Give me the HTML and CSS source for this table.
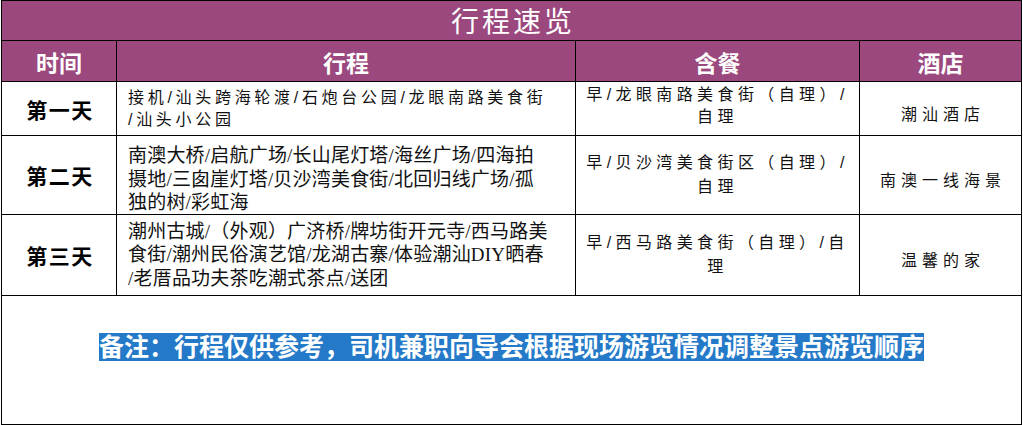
FILE: index.html
```html
<!DOCTYPE html>
<html lang="zh-CN">
<head>
<meta charset="utf-8">
<title>行程速览</title>
<link rel="stylesheet" href="styles.css">
</head>
<body>
<div class="sheet">
  <div class="cell title">行程速览</div>

  <div class="cell head">时间</div>
  <div class="cell head">行程</div>
  <div class="cell head">含餐</div>
  <div class="cell head">酒店</div>

  <div class="cell day">第一天</div>
  <div class="cell trip trip-wide"><div>接机/汕头跨海轮渡/石炮台公园/龙眼南路美食街<br>/汕头小公园</div></div>
  <div class="cell meal meal-first"><div>早/龙眼南路美食街（自理）/<br>自理</div></div>
  <div class="cell hotel">潮汕酒店</div>

  <div class="cell day">第二天</div>
  <div class="cell trip trip-serif trip-low"><div>南澳大桥/启航广场/长山尾灯塔/海丝广场/四海拍<br>摄地/三囱崖灯塔/贝沙湾美食街/北回归线广场/孤<br>独的树/彩虹海</div></div>
  <div class="cell meal"><div>早/贝沙湾美食街区（自理）/<br>自理</div></div>
  <div class="cell hotel">南澳一线海景</div>

  <div class="cell day">第三天</div>
  <div class="cell trip trip-serif"><div>潮州古城/（外观）广济桥/牌坊街开元寺/西马路美<br>食街/潮州民俗演艺馆/龙湖古寨/体验潮汕DIY晒春<br>/老厝品功夫茶吃潮式茶点/送团</div></div>
  <div class="cell meal"><div>早/西马路美食街（自理）/自<br>理</div></div>
  <div class="cell hotel">温馨的家</div>

  <div class="cell note"><div class="note-line"><span class="mark">备注：行程仅供参考，司机兼职向导会根据现场游览情况调整景点游览顺序</span></div></div>
</div>
</body>
</html>
```
FILE: styles.css
```css
html, body {
  margin: 0;
  padding: 0;
  background: #ffffff;
}

body {
  font-family: "Liberation Sans", "Noto Sans CJK SC", sans-serif;
  color: #111111;
}

.sheet {
  display: grid;
  grid-template-columns: 115px 459px 284px 162px;
  grid-template-rows: 40px 41px 54px 79px 81px 129px;
  width: 1020px;
  margin-left: 1px;
  border-left: 1px solid #000;
  border-top: 1px solid #000;
}

.cell {
  box-sizing: border-box;
  border-right: 1px solid #000;
  border-bottom: 1px solid #000;
  display: flex;
  align-items: center;
  justify-content: center;
  min-width: 0;
}

.title {
  grid-column: 1 / -1;
  background: #9b487e;
  color: #ffffff;
  font-size: 28px;
  letter-spacing: 3px;
  padding: 5px 0 0 3px;
  line-height: 1;
}

.head {
  background: #9b487e;
  color: #ffffff;
  font-size: 23px;
  font-weight: bold;
  line-height: 1;
  padding-top: 6px;
}

.day {
  font-size: 21px;
  font-weight: bold;
  letter-spacing: 1.5px;
  color: #000;
  padding-left: 2px;
}

.trip {
  justify-content: flex-start;
  padding-left: 11px;
  white-space: nowrap;
}

.trip-wide {
  font-size: 16px;
  letter-spacing: 3.7px;
  line-height: 22px;
}

.trip-serif {
  font-family: "Liberation Serif", "Noto Sans CJK SC", serif;
  font-size: 19px;
  letter-spacing: 0.2px;
  line-height: 23.5px;
}

.trip-low {
  padding-top: 9px;
}

.meal {
  text-align: center;
  font-size: 16px;
  letter-spacing: 4.4px;
  line-height: 24px;
  white-space: nowrap;
}

.meal-first {
  line-height: 22px;
  padding-bottom: 6px;
}

.hotel {
  font-size: 16px;
  letter-spacing: 5px;
  padding: 8px 0 0 5px;
}

.note {
  grid-column: 1 / -1;
  padding-bottom: 23px;
}

.note-line {
  line-height: 36px;
}

.mark {
  background: #2479c8;
  color: #ffffff;
  font-size: 25px;
  font-weight: bold;
}
```
